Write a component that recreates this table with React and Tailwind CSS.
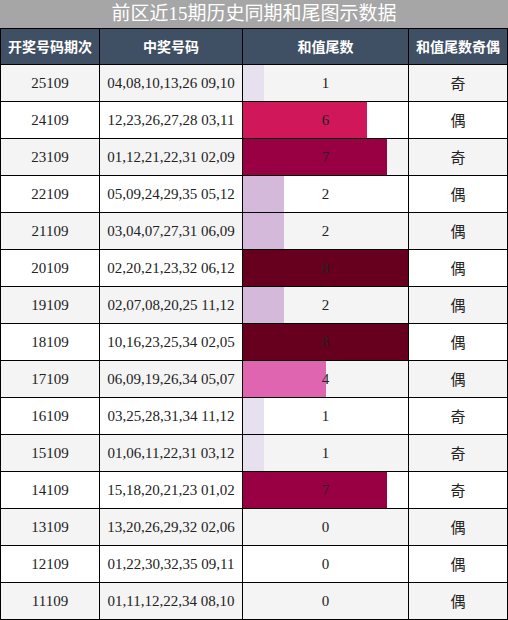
import React from "react";

const rows = [
  ["25109", "04,08,10,13,26 09,10", 1],
  ["24109", "12,23,26,27,28 03,11", 6],
  ["23109", "01,12,21,22,31 02,09", 7],
  ["22109", "05,09,24,29,35 05,12", 2],
  ["21109", "03,04,07,27,31 06,09", 2],
  ["20109", "02,20,21,23,32 06,12", 8],
  ["19109", "02,07,08,20,25 11,12", 2],
  ["18109", "10,16,23,25,34 02,05", 8],
  ["17109", "06,09,19,26,34 05,07", 4],
  ["16109", "03,25,28,31,34 11,12", 1],
  ["15109", "01,06,11,22,31 03,12", 1],
  ["14109", "15,18,20,21,23 01,02", 7],
  ["13109", "13,20,26,29,32 02,06", 0],
  ["12109", "01,22,30,32,35 09,11", 0],
  ["11109", "01,11,12,22,34 08,10", 0],
];

// PuRd-ish scale by tail value
const barColor = {
  0: "#f7f4f9",
  1: "#e7e1ef",
  2: "#d4b9da",
  3: "#c994c7",
  4: "#df65b0",
  5: "#e7298a",
  6: "#d0175a",
  7: "#980043",
  8: "#67001f",
  9: "#49000f",
};

const serif = "font-['Liberation_Serif','Noto_Sans_CJK_SC',serif]";
const sans = "font-['Noto_Sans_CJK_SC','Noto_Sans',sans-serif]";

function App() {
  return (
    <div className="w-[508px] h-[620px] bg-white">
      <div
        className={`h-[28px] bg-[#a6a6a6] text-white text-[19px] leading-[28px] text-center ${serif}`}
      >
        前区近15期历史同期和尾图示数据
      </div>
      <div className="border-l border-t border-black">
        <div className={`grid grid-cols-[99px_143px_166px_99px] bg-[#3f5064] text-white text-[14px] font-bold ${sans}`}>
          {["开奖号码期次", "中奖号码", "和值尾数", "和值尾数奇偶"].map((h) => (
            <div key={h} className="h-[36px] flex items-center justify-center border-r border-b border-black">
              {h}
            </div>
          ))}
        </div>
        {rows.map(([qi, nums, v], i) => (
          <div
            key={qi}
            className={`grid grid-cols-[99px_143px_166px_99px] text-[15px] text-[#222] ${i % 2 === 0 ? "bg-[#f4f4f4]" : "bg-white"}`}
          >
            <div className={`h-[37px] flex items-center justify-center border-r border-b border-black ${serif}`}>
              {qi}
            </div>
            <div className={`h-[37px] flex items-center justify-center border-r border-b border-black ${serif}`}>
              {nums}
            </div>
            <div className={`h-[37px] relative border-r border-b border-black ${serif}`}>
              <div
                className="absolute left-0 top-0 bottom-0"
                style={{ width: `${(v / 8) * 100}%`, backgroundColor: barColor[v] }}
              />
              <div className="relative h-full flex items-center justify-center">{v}</div>
            </div>
            <div className={`h-[37px] flex items-center justify-center border-r border-b border-black ${sans}`}>
              {v % 2 === 0 ? "偶" : "奇"}
            </div>
          </div>
        ))}
      </div>
    </div>
  );
}

export default App;
